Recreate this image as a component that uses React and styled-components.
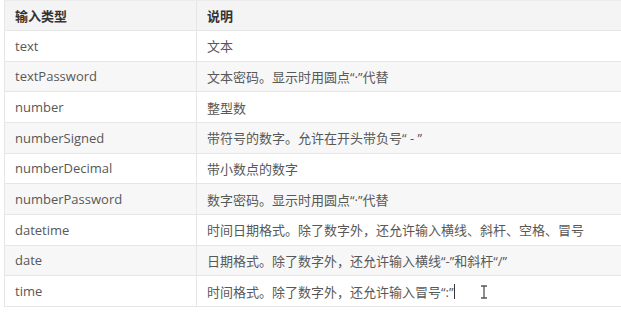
import React from "react";
import styled, { createGlobalStyle } from "styled-components";

const Global = createGlobalStyle`
  html, body { margin: 0; padding: 0; background: #ffffff; overflow: hidden; }
  body { font-family: "Open Sans", "Noto Sans CJK SC", sans-serif; }
`;

const Page = styled.div`
  width: 621px;
  height: 315px;
  padding-left: 4px;
  box-sizing: border-box;
  overflow: hidden;
  position: relative;
`;

const Table = styled.div`
  width: 660px;
  display: flex;
  flex-direction: column;
  border-left: 1px solid #e6e6e6;
  border-top: 1px solid #ececec;
`;

const Row = styled.div`
  display: flex;
  height: ${(p) => (p.$head ? "30px" : "30.67px")};
  box-sizing: border-box;
  border-bottom: 1px solid #e6e6e6;
  background: ${(p) => (p.$head ? "#f4f4f4" : p.$stripe ? "#f7f7f7" : "#ffffff")};
`;

const Cell = styled.div`
  display: flex;
  align-items: center;
  box-sizing: border-box;
  font-size: 13px;
  white-space: nowrap;
  color: ${(p) => (p.$head ? "#333333" : "#585858")};
  font-weight: ${(p) => (p.$head ? 700 : 400)};
  ${(p) =>
    p.$first
      ? `width: 192px; padding-left: 10px; border-right: 1px solid #e6e6e6;`
      : `flex: 1; padding-left: 10px;`}
`;

const Caret = styled.span`
  display: inline-block;
  width: 1px;
  height: 15px;
  background: #333;
  margin-left: 1px;
`;

const IBeam = styled.svg`
  position: absolute;
  left: 480px;
  top: 285px;
`;

const rows = [
  ["text", "文本"],
  ["textPassword", "文本密码。显示时用圆点“·”代替"],
  ["number", "整型数"],
  ["numberSigned", "带符号的数字。允许在开头带负号“ - ”"],
  ["numberDecimal", "带小数点的数字"],
  ["numberPassword", "数字密码。显示时用圆点“·”代替"],
  ["datetime", "时间日期格式。除了数字外，还允许输入横线、斜杆、空格、冒号"],
  ["date", "日期格式。除了数字外，还允许输入横线“-”和斜杆“/”"],
  ["time", "时间格式。除了数字外，还允许输入冒号“:”"],
];

export default function App() {
  return (
    <Page>
      <Global />
      <Table>
        <Row $head>
          <Cell $head $first>输入类型</Cell>
          <Cell $head>说明</Cell>
        </Row>
        {rows.map(([k, v], i) => (
          <Row key={k} $stripe={i % 2 === 1}>
            <Cell $first>{k}</Cell>
            <Cell>
              {v}
              {k === "time" && <Caret />}
            </Cell>
          </Row>
        ))}
      </Table>
      <IBeam width="8" height="14" viewBox="0 0 8 14">
        <path d="M1 1h6M4 1v12M1 13h6" stroke="#555" strokeWidth="1.3" fill="none" />
      </IBeam>
    </Page>
  );
}
